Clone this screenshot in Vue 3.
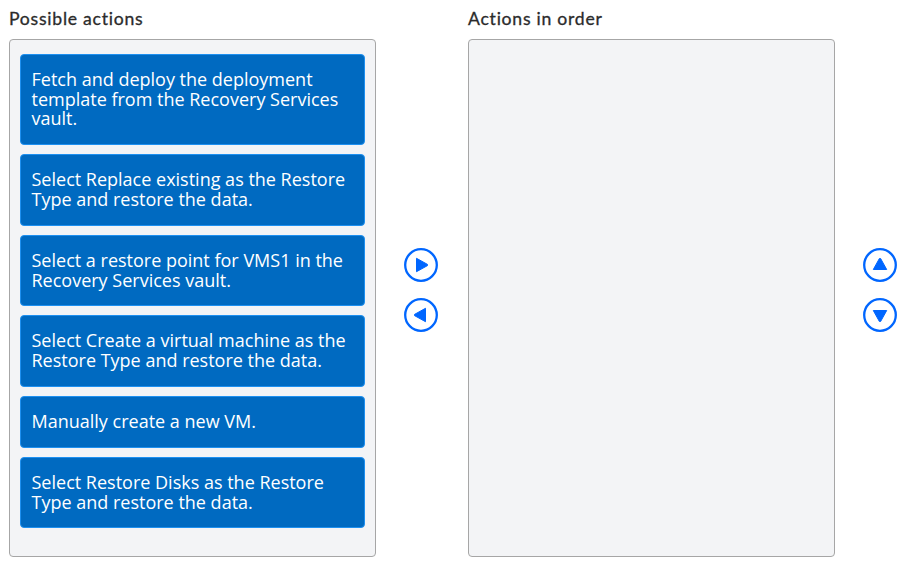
<script setup>
const actions = [
  'Fetch and deploy the deployment template from the Recovery Services vault.',
  'Select Replace existing as the Restore Type and restore the data.',
  'Select a restore point for VMS1 in the Recovery Services vault.',
  'Select Create a virtual machine as the Restore Type and restore the data.',
  'Manually create a new VM.',
  'Select Restore Disks as the Restore Type and restore the data.',
]
</script>

<template>
  <main class="board">
    <section class="column">
      <h2>Possible actions</h2>
      <ul class="panel">
        <li v-for="action in actions" :key="action" class="card">{{ action }}</li>
      </ul>
    </section>
    <div class="controls">
      <button aria-label="Add"><svg viewBox="0 0 34 34"><circle cx="17" cy="17" r="15.8" /><path d="M12.5 10.3L23.5 16.4V17.6L12.5 23.7Z" /></svg></button>
      <button aria-label="Remove"><svg viewBox="0 0 34 34"><circle cx="17" cy="17" r="15.8" /><path d="M21.5 10.3L10.5 16.4V17.6L21.5 23.7Z" /></svg></button>
    </div>
    <section class="column">
      <h2>Actions in order</h2>
      <ul class="panel"></ul>
    </section>
    <div class="controls">
      <button aria-label="Move up"><svg viewBox="0 0 34 34"><circle cx="17" cy="17" r="15.8" /><path d="M10.3 21.5L16.4 10.5H17.6L23.7 21.5Z" /></svg></button>
      <button aria-label="Move down"><svg viewBox="0 0 34 34"><circle cx="17" cy="17" r="15.8" /><path d="M10.3 12.5L16.4 23.5H17.6L23.7 12.5Z" /></svg></button>
    </div>
  </main>
</template>

<style>
body { background: #fff; }
</style>

<style scoped>
.board {
  box-sizing: border-box;
  width: 903px;
  height: 563px;
  padding-left: 9px;
  display: flex;
  overflow: hidden;
  font-family: "Open Sans", sans-serif;
}
.column { width: 367px; flex: none; }
h2 {
  margin: 0;
  height: 39px;
  line-height: 38px;
  font-family: Lato, sans-serif;
  font-size: 17.6px;
  font-weight: 400;
  letter-spacing: 0.75px;
  color: #2b2b2b;
  -webkit-text-stroke: 0.3px #2b2b2b;
  white-space: nowrap;
}
.panel {
  box-sizing: border-box;
  margin: 0;
  height: 518px;
  padding: 13.85px 10px;
  list-style: none;
  display: flex;
  flex-direction: column;
  gap: 9.15px;
  background: #f3f4f6;
  border: 1px solid #a6a6a6;
  border-radius: 4px;
}
.card {
  box-sizing: border-box;
  padding: 14.94px 10.5px;
  border: 1px solid #1e90f0;
  border-radius: 4px;
  background: #006ac1;
  color: #fff;
  font-size: 18px;
  line-height: 19.8px;
}
.controls {
  flex: none;
  width: 92px;
  padding-top: 248px;
  display: flex;
  flex-direction: column;
  gap: 16px;
}
button {
  width: 34px;
  height: 34px;
  margin-left: 28px;
  padding: 0;
  border: 0;
  background: none;
}
svg { display: block; width: 34px; height: 34px; }
circle { fill: #fff; stroke: #0066ff; stroke-width: 2.3; }
path { fill: #0066ff; stroke: #0066ff; stroke-width: 1; stroke-linejoin: round; }
</style>
